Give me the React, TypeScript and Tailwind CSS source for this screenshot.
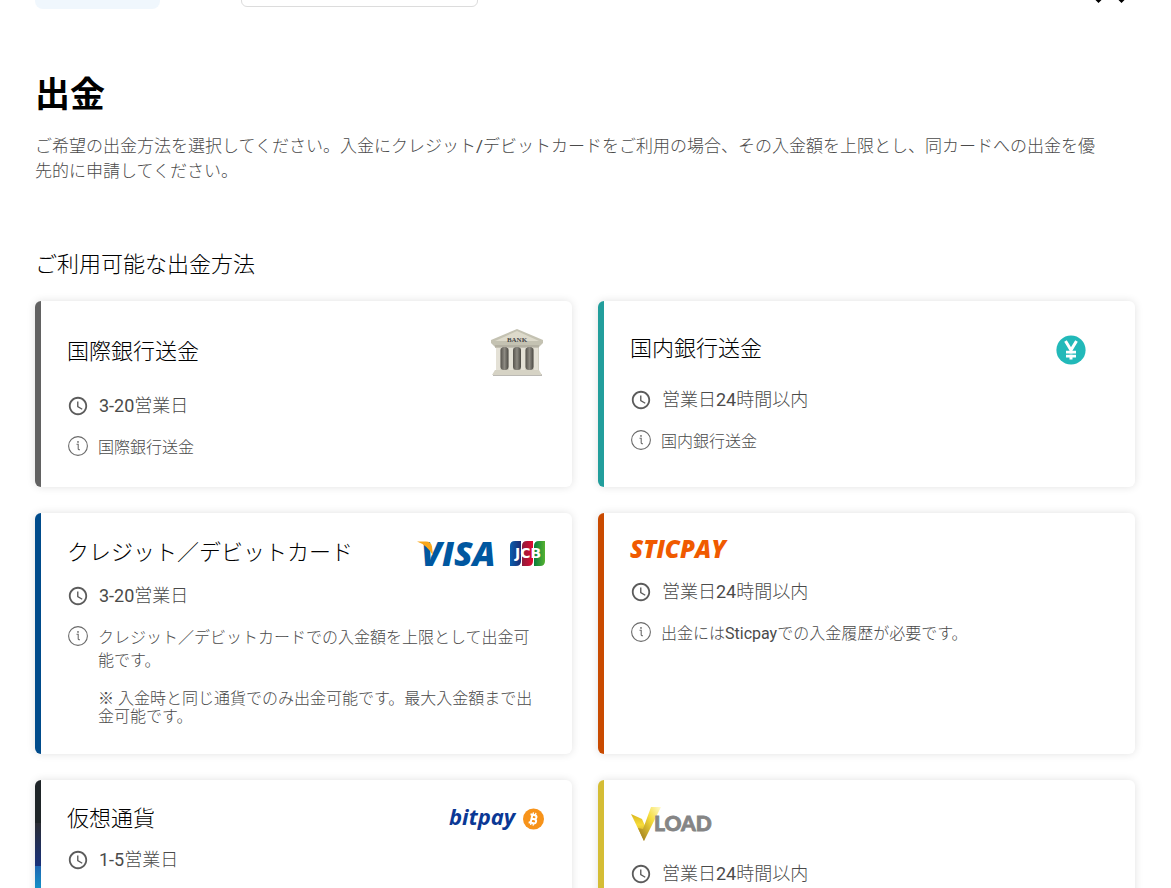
import type { ReactNode } from 'react';
import { MdAccessTime } from 'react-icons/md';

function InfoIcon() {
  return (
    <svg className="h-5 w-5" viewBox="0 0 20 20" fill="none" stroke="#6a6a6a" aria-hidden="true">
      <circle cx="10" cy="10" r="9.4" strokeWidth="1.1" />
      <path d="M8.500 8.300h1.700v4.400q0 1.200 1.800 1" strokeWidth="1.1" />
      <circle cx="10" cy="5.9" r="0.9" fill="#6a6a6a" stroke="none" />
    </svg>
  );
}

function BankLogo() {
  return (
    <svg className="mt-0.5 mr-0.5 h-12 w-[54px]" viewBox="0 0 54 48" role="img" aria-label="BANK">
      <defs>
        <linearGradient id="hall" x1="0" x2="1">
          <stop offset="0" stopColor="#56534d" />
          <stop offset="0.5" stopColor="#8d8a82" />
          <stop offset="1" stopColor="#4b4943" />
        </linearGradient>
      </defs>
      <path d="M3 45h49v2H3z" fill="#8d8b82" opacity="0.6" />
      <path d="M6 14h43v27H6z" fill="#d3d0c3" />
      {[10.5, 23, 35.5].map((x) => (
        <rect key={x} x={x} y="18" width="8" height="23" rx="3.5" fill="url(#hall)" />
      ))}
      {[6, 19, 31, 44].map((x) => (
        <g key={x}>
          <rect x={x} y="17" width="4" height="25" fill="#e4e1d6" />
          <rect x={x - 1} y="17" width="6" height="2" fill="#c4c1b4" />
        </g>
      ))}
      <path d="M27 0 53 11v3L49 18H5L1 14v-3z" fill="#c4c2b2" />
      <path d="M27 2 49 12H5z" fill="#dddacb" />
      <path d="M5 16h44v2H5z" fill="#b4b1a3" />
      <path d="M5 41h44l3 5H2z" fill="#d6d3c5" />
      <text x="27" y="12.5" textAnchor="middle" fontFamily="Liberation Serif, serif" fontWeight="700" fontSize="7" fill="#444">BANK</text>
    </svg>
  );
}

function YenLogo() {
  return (
    <span className="flex w-[76px] justify-center pt-0.5">
      <svg className="h-[30px] w-[30px]" viewBox="0 0 30 30" role="img" aria-label="JPY">
        <circle cx="15" cy="15" r="14.6" fill="#22b9b9" />
        <path d="M9.5 6 15 15l5.500-9M15 14.500V24.500M10 17.300h10M10 21h10" stroke="#fff" strokeWidth="3" fill="none" />
        <path d="M10 19.150h10" stroke="#22b9b9" strokeWidth="0.9" />
      </svg>
    </span>
  );
}

function CardLogos() {
  return (
    <svg className="mr-px h-[27px] w-[128px] overflow-visible" viewBox="0 0 128 27" role="img" aria-label="VISA JCB">
      <defs>
        <linearGradient id="jb" x1="0" x2="1"><stop offset="0" stopColor="#0a5fae" /><stop offset="1" stopColor="#1b2a72" /></linearGradient>
        <linearGradient id="jr" x1="0" x2="1"><stop offset="0" stopColor="#8c1d3c" /><stop offset="1" stopColor="#e0082f" /></linearGradient>
        <linearGradient id="jg" x1="0" x2="1"><stop offset="0" stopColor="#0a7d3c" /><stop offset="1" stopColor="#56b331" /></linearGradient>
      </defs>
      <text x="4" y="26" fontFamily="Open Sans, sans-serif" fontWeight="800" fontStyle="italic" fontSize="34" fill="#0057a0">VISA</text>
      <path d="M0 1.500h9q5 0 6 5l1 9Q10 5 0 1.500z" fill="#faa61a" />
      <path d="M98 1h6v20q0 5-5 5h-6V6q0-5 5-5z" fill="url(#jb)" />
      <path d="M110 1h6v20q0 5-5 5h-6V6q0-5 5-5z" fill="url(#jr)" />
      <path d="M122 1h6v20q0 5-5 5h-6V6q0-5 5-5z" fill="url(#jg)" />
      <path d="M104 1h1v25h-1zM116 1h1v25h-1z" fill="#fff" />
      <text x="111" y="18" textAnchor="middle" fontFamily="DejaVu Sans, sans-serif" fontWeight="700" fontSize="14" fill="#fff">JCB</text>
    </svg>
  );
}

function SticpayLogo() {
  return (
    <svg className="h-6 w-[110px] overflow-visible" viewBox="0 0 110 24" role="img" aria-label="STICPAY">
      <text x="0" y="19" fontFamily="Open Sans, sans-serif" fontWeight="800" fontStyle="italic" fontSize="24" fill="#f05a00">STICPAY</text>
    </svg>
  );
}

function BitpayLogo() {
  return (
    <svg className="mr-px h-6 w-[97px] overflow-visible" viewBox="0 0 97 24" role="img" aria-label="bitpay">
      <text x="1" y="18" fontFamily="Open Sans, sans-serif" fontWeight="700" fontStyle="italic" fontSize="22" fill="#0a3895">bitpay</text>
      <circle cx="85.500" cy="12" r="10.500" fill="#f7931a" />
      <g transform="rotate(13 85.5 12)" fill="none" stroke="#fff" strokeWidth="2">
        <path d="M81.500 8h4.500a2 2 0 0 1 0 4H83.500h3a2.100 2.100 0 0 1 0 4.200h-5M83.500 8v8" />
        <path d="M84 5.500v2.500M86.500 5.500v2.500M84 16V18.500M86.500 16V18.500" strokeWidth="1.300" />
      </g>
    </svg>
  );
}

function VloadLogo() {
  return (
    <svg className="h-[37px] w-[84px] overflow-visible" viewBox="0 0 84 37" role="img" aria-label="VLOAD">
      <defs>
        <linearGradient id="vl" x1="0" y1="0" x2="0" y2="1"><stop offset="0" stopColor="#d9b61c" /><stop offset="0.4" stopColor="#f7dc3a" /><stop offset="1" stopColor="#a87f18" /></linearGradient>
        <linearGradient id="vr" x1="1" y1="0" x2="0" y2="1"><stop offset="0" stopColor="#fffbd0" /><stop offset="0.4" stopColor="#f5dc3a" /><stop offset="1" stopColor="#94701c" /></linearGradient>
      </defs>
      <path d="M1 7 12 12l4 9-2 13z" fill="url(#vl)" />
      <path d="M21 0h10L14 34 8 21l5 1z" fill="url(#vr)" />
      <text x="24" y="24" fontFamily="Lato, sans-serif" fontWeight="900" fontSize="21" fill="#858585" stroke="#858585" strokeWidth="0.8">LOAD</text>
    </svg>
  );
}

type Method = {
  id: string;
  bar: string;
  header: string;
  title?: string;
  logo: ReactNode;
  time: string;
  info?: string;
  note?: string;
};

const methods: Method[] = [
  { id: 'intl', bar: 'bg-[#626262]', header: 'h-[50px]', title: '国際銀行送金', logo: <BankLogo />, time: '3-20営業日', info: '国際銀行送金' },
  { id: 'local', bar: 'bg-[#229e9c]', header: 'h-11', title: '国内銀行送金', logo: <YenLogo />, time: '営業日24時間以内', info: '国内銀行送金' },
  {
    id: 'card',
    bar: 'bg-[#004b8b]',
    header: 'h-7',
    title: 'クレジット／デビットカード',
    logo: <CardLogos />,
    time: '3-20営業日',
    info: 'クレジット／デビットカードでの入金額を上限として出金可能です。',
    note: '※ 入金時と同じ通貨でのみ出金可能です。最大入金額まで出金可能です。',
  },
  { id: 'sticpay', bar: 'bg-[#c94a00]', header: 'h-6', logo: <SticpayLogo />, time: '営業日24時間以内', info: '出金にはSticpayでの入金履歴が必要です。' },
  {
    id: 'crypto',
    bar: 'bg-[linear-gradient(to_bottom,#1f2528_0px,#1f2528_43px,#2b2d33_43px,#18317c_86px,#1f66b2_86px,#1295c9_110px)]',
    header: 'h-[25px]',
    title: '仮想通貨',
    logo: <BitpayLogo />,
    time: '1-5営業日',
  },
  { id: 'vload', bar: 'bg-[#d5bd35]', header: 'h-[39px]', logo: <VloadLogo />, time: '営業日24時間以内' },
];

function MethodCard({ method }: { method: Method }) {
  return (
    <li className="flex overflow-hidden rounded-md bg-white shadow-[0_0_8px_rgba(0,0,0,0.12)]">
      <div className={`w-1.5 shrink-0 ${method.bar}`} />
      <div className="min-w-0 flex-1 px-[26px] pt-[26px] pb-7">
        <div className={`flex items-center justify-between ${method.header}`}>
          {method.title && <h3 className="text-[22px] leading-7 text-black">{method.title}</h3>}
          {method.logo}
        </div>
        <div className="mt-[15px] flex items-center gap-2.5 text-[18px] leading-7">
          <MdAccessTime className="h-[22px] w-[22px] shrink-0 text-[#5c5c5c]" />
          <span>{method.time}</span>
        </div>
        {method.info && (
          <div className="mt-4 flex gap-2.5 pr-1 pl-px">
            <span className="shrink-0"><InfoIcon /></span>
            <div>
              <p className="text-base leading-[23px]">{method.info}</p>
              {method.note && <p className="mt-[18px] text-base leading-[18px]">{method.note}</p>}
            </div>
          </div>
        )}
      </div>
    </li>
  );
}

export default function App() {
  return (
    <div className="bg-white font-['Roboto','Noto_Sans_CJK_JP_Light','Noto_Sans_CJK_JP',sans-serif] font-normal text-[#4a4a4a]" lang="ja">
      <header className="flex h-[9px] items-end overflow-hidden px-[35px]">
        <button type="button" aria-label="メニュー" className="h-10 w-[125px] shrink-0 rounded-lg bg-[#f0f7fd]" />
        <input type="text" aria-label="口座" className="mb-0.5 ml-[81px] h-10 w-[237px] shrink-0 rounded-md border border-[#dcdcdc]" />
        <svg className="mr-[7px] mb-1.5 ml-auto h-[3px] w-9 shrink-0" viewBox="0 0 36 3" aria-hidden="true">
          <path d="M2.500 0h6L5.500 3zM25.500 0h6l-3 3z" fill="#000" />
        </svg>
      </header>
      <main className="pr-9 pl-[35px]">
        <h1 className="mt-[61px] font-['Roboto','Noto_Sans_CJK_JP',sans-serif] text-[35px] leading-[52px] font-bold text-black">出金</h1>
        <p className="mt-3 pr-8 text-[17px] leading-[25px]">
          ご希望の出金方法を選択してください。入金にクレジット/デビットカードをご利用の場合、その入金額を上限とし、同カードへの出金を優先的に申請してください。
        </p>
        <h2 className="mt-16 text-[22px] leading-[34px] text-black">ご利用可能な出金方法</h2>
        <ul className="mt-[19px] grid grid-cols-2 gap-[26px]">
          {methods.map((m) => (
            <MethodCard key={m.id} method={m} />
          ))}
        </ul>
      </main>
    </div>
  );
}
